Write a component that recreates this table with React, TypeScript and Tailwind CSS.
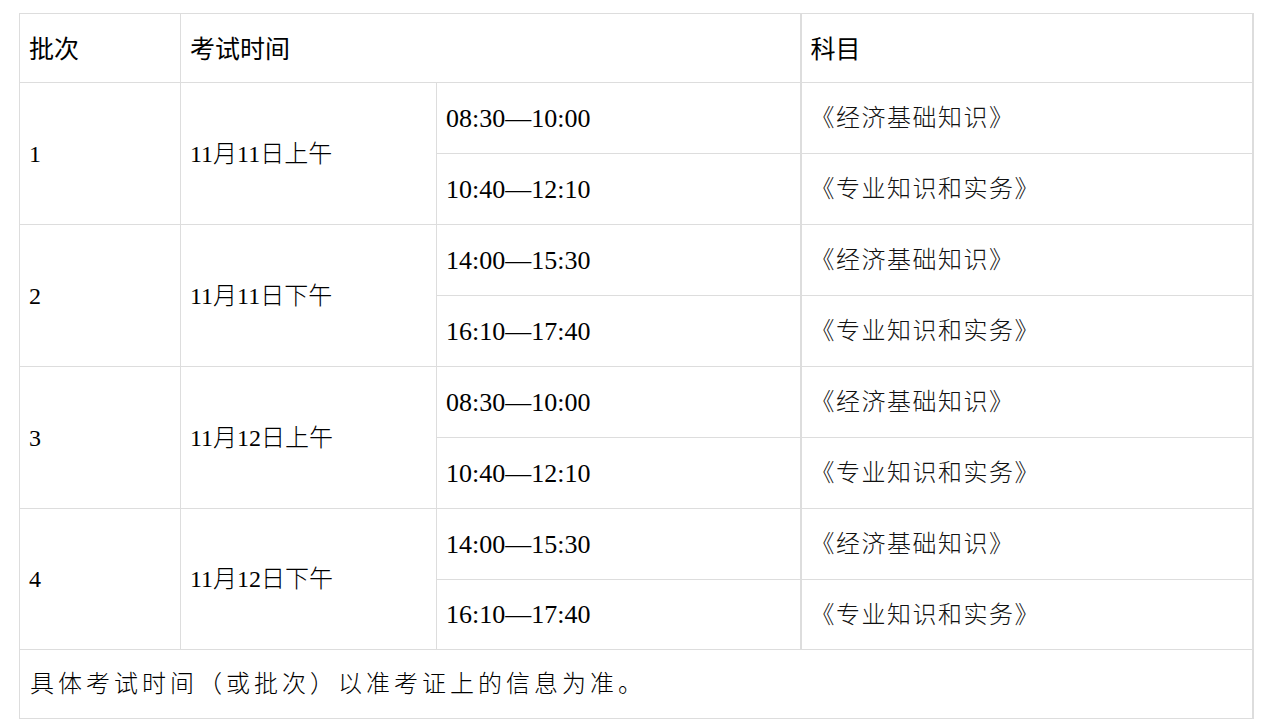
import React from 'react';

const rows = [
  { batch: '1', date: '11月11日上午', times: ['08:30—10:00', '10:40—12:10'] },
  { batch: '2', date: '11月11日下午', times: ['14:00—15:30', '16:10—17:40'] },
  { batch: '3', date: '11月12日上午', times: ['08:30—10:00', '10:40—12:10'] },
  { batch: '4', date: '11月12日下午', times: ['14:00—15:30', '16:10—17:40'] },
];

const subjects = ['《经济基础知识》', '《专业知识和实务》'];

const serif = "font-['Liberation_Serif','Noto_Sans_CJK_SC',serif]";
const cell = 'border border-[#dddddd] px-[9px] align-middle';

const App: React.FC = () => {
  return (
    <div className="bg-white min-h-screen pt-[13px] pl-[19px]">
      <table className="border-collapse table-fixed w-[1233px] text-black">
        <colgroup>
          <col className="w-[161px]" />
          <col className="w-[256px]" />
          <col className="w-[364px]" />
          <col className="w-[452px]" />
        </colgroup>
        <thead>
          <tr className="h-[69px] font-['Noto_Sans_CJK_SC',sans-serif] text-[25px] font-normal">
            <td className={cell}>批次</td>
            <td className={cell} colSpan={2}>考试时间</td>
            <td className={`${cell} border-l-2 border-r-2`}>科目</td>
          </tr>
        </thead>
        <tbody className={serif}>
          {rows.map((r, ri) =>
            r.times.map((t, i) => (
              <tr key={r.batch + i} className={ri === 3 && i === 1 ? 'h-[70px]' : 'h-[71px]'}>
                {i === 0 && (
                  <>
                    <td rowSpan={2} className={`${cell} text-[24px]`}>{r.batch}</td>
                    <td rowSpan={2} className={`${cell} text-[24px] font-light`}>{r.date}</td>
                  </>
                )}
                <td className={`${cell} text-[26px]`}>{t}</td>
                <td className={`${cell} border-l-2 border-r-2 text-[24px] tracking-[1.5px] font-light text-[#111]`}>
                  {subjects[i]}
                </td>
              </tr>
            ))
          )}
          <tr className="h-[69px]">
            <td colSpan={4} className={`${cell} border-r-2 pl-[10px] text-[24px] tracking-[4px] font-light`}>
              具体考试时间（或批次）以准考证上的信息为准。
            </td>
          </tr>
        </tbody>
      </table>
    </div>
  );
};

export default App;
